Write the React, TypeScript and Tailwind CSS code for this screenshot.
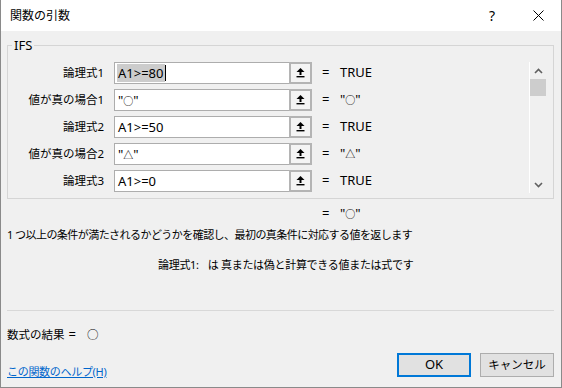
import React from "react";

const Circ = () => <span className="text-[10px]">○</span>;
const Tri = () => <span className="text-[10px]">△</span>;

const rows: { label: string; value: React.ReactNode; result: React.ReactNode; selected?: boolean }[] = [
  { label: "論理式1", value: "A1>=80", result: "TRUE", selected: true },
  { label: "値が真の場合1", value: <>"<Circ />"</>, result: <>"<Circ />"</> },
  { label: "論理式2", value: "A1>=50", result: "TRUE" },
  { label: "値が真の場合2", value: <>"<Tri />"</>, result: <>"<Tri />"</> },
  { label: "論理式3", value: "A1>=0", result: "TRUE" },
];

function UploadIcon() {
  return (
    <svg width="9" height="10" viewBox="0 0 9 10" fill="#000">
      <polygon points="4.5,0 0.5,4 8.5,4" />
      <rect x="3.5" y="4" width="2" height="3" />
      <rect x="0.5" y="8" width="8" height="1.4" />
    </svg>
  );
}

function Chevron({ down }: { down?: boolean }) {
  return (
    <svg width="9" height="6" viewBox="0 0 9 6">
      <polyline
        points={down ? "1,1 4.5,4.5 8,1" : "1,5 4.5,1.5 8,5"}
        fill="none"
        stroke="#606060"
        strokeWidth="1.6"
      />
    </svg>
  );
}

export default function App() {
  return (
    <div className="w-[562px] h-[388px] flex flex-col border-x border-b border-[#8a8a8a] bg-[#f0f0f0] text-black font-['Noto_Sans','Noto_Sans_CJK_JP',sans-serif] overflow-hidden">
      {/* title bar */}
      <div className="h-[31px] shrink-0 bg-white flex items-center">
        <div className="pl-[9px] text-[12px] leading-none flex-1">関数の引数</div>
        <div className="w-[46px] h-full flex items-center justify-center text-[14px]">?</div>
        <div className="w-[46px] h-full flex items-center justify-center">
          <svg width="11" height="11" viewBox="0 0 11 11">
            <path d="M0.5,0.5 L10.5,10.5 M10.5,0.5 L0.5,10.5" stroke="#000" strokeWidth="1" />
          </svg>
        </div>
      </div>

      {/* body */}
      <div className="flex-1 flex flex-col pl-[6px] pr-[7px]">
        <fieldset className="mt-[6px] border border-[#d5d5d5] h-[162px] flex flex-col">
          <legend className="ml-[4px] px-[2px] text-[13px] leading-[16px]">IFS</legend>
          <div className="flex pt-[9px]">
            <div className="flex flex-col gap-[5px] flex-1">
              {rows.map((r) => (
                <div key={r.label} className="flex items-center h-[22px]">
                  <div className="w-[97px] text-right text-[11.5px] leading-none pr-[1px]">{r.label}</div>
                  <div className="ml-[9px] w-[176px] h-[22px] bg-white border border-[#adadad] flex items-center pl-[2px] text-[13px]">
                    {r.selected ? (
                      <>
                        <span className="bg-[#cccccc] leading-[18px] px-[1px]">{r.value}</span>
                        <span className="w-px h-[16px] bg-black" />
                      </>
                    ) : (
                      <span className="leading-[18px] px-[1px]">{r.value}</span>
                    )}
                  </div>
                  <div className="w-[23px] h-[22px] border-2 border-[#b4b4b4] bg-[#f4f4f4] flex items-center justify-center -ml-px">
                    <UploadIcon />
                  </div>
                  <div className="ml-[10px] text-[13px] w-[18px]">=</div>
                  <div className="text-[13px]">{r.result}</div>
                </div>
              ))}
            </div>
            <div className="w-[17px] h-[131px] border-l border-white flex flex-col mr-[7px]">
              <div className="h-[17px] flex items-center justify-center">
                <Chevron />
              </div>
              <div className="h-[17px] bg-[#cdcdcd]" />
              <div className="flex-1" />
              <div className="h-[17px] flex items-center justify-center">
                <Chevron down />
              </div>
            </div>
          </div>
        </fieldset>

        <div className="mt-[7px] h-[16px] flex items-center pl-[315px] text-[13px]">
          <span className="w-[18px]">=</span>
          <span>"<Circ />"</span>
        </div>
        <div className="mt-[5px] h-[16px] flex items-center text-[11px] tracking-[-0.55px]">
          1 つ以上の条件が満たされるかどうかを確認し、最初の真条件に対応する値を返します
        </div>
        <div className="mt-[14px] h-[16px] flex items-center pl-[151px] text-[11px] tracking-[-0.3px]">
          <span>論理式1:</span>
          <span className="ml-[9px]">は 真または偽と計算できる値または式です</span>
        </div>
        <div className="mt-[37px] h-px bg-[#d8d8d8]" />
        <div className="mt-[16px] h-[16px] flex items-center text-[11.5px]">
          <span>数式の結果</span>
          <span className="ml-[4px] text-[13px]">=</span>
          <span className="ml-[11px]">○</span>
        </div>
        <div className="mt-[10px] flex items-start">
          <a className="mt-[11px] h-[16px] leading-[16px] text-[11px] tracking-[-0.3px] text-[#0066cc] underline flex-1">
            この関数のヘルプ(H)
          </a>
          <div className="w-[74px] h-[24px] border-2 border-[#0078d7] bg-[#e1e1e1] flex items-center justify-center text-[13px]">
            OK
          </div>
          <div className="ml-[9px] w-[74px] h-[24px] border border-[#adadad] bg-[#e1e1e1] flex items-center justify-center text-[11.5px]">
            キャンセル
          </div>
        </div>
      </div>
    </div>
  );
}
